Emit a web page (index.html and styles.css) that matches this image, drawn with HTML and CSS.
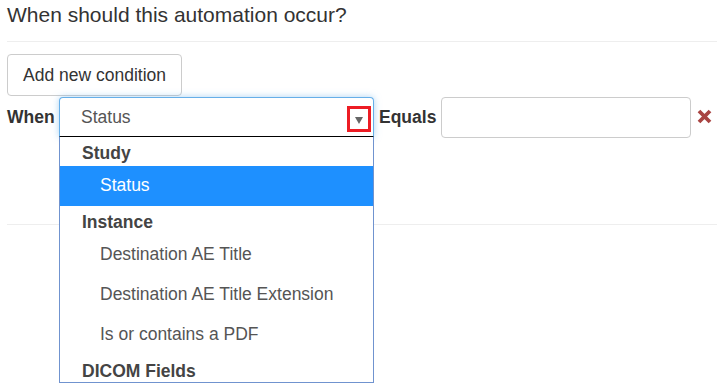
FILE: index.html
```html
<!DOCTYPE html>
<html>
<head>
<meta charset="utf-8">
<link rel="stylesheet" href="styles.css">
</head>
<body>
<div class="page">
  <h4 class="title">When should this automation occur?</h4>
  <hr class="rule rule-top">
  <button class="btn">Add new condition</button>
  <div class="cond-row">
    <label class="lbl lbl-when">When</label>
    <div class="select-wrap">
      <div class="select">
        <span class="select-value">Status</span>
        <span class="arrow-box"><span class="arrow"></span></span>
      </div>
      <div class="menu">
        <div class="group">Study</div>
        <div class="opt active">Status</div>
        <div class="group">Instance</div>
        <div class="opt">Destination AE Title</div>
        <div class="opt">Destination AE Title Extension</div>
        <div class="opt">Is or contains a PDF</div>
        <div class="group">DICOM Fields</div>
      </div>
    </div>
    <label class="lbl lbl-eq">Equals</label>
    <input class="text-input" type="text">
    <span class="remove">
      <svg width="15" height="15" viewBox="0 0 15 15"><path d="M2 2 L13 13 M13 2 L2 13" stroke="#a94442" stroke-width="3.8" stroke-linecap="butt"/></svg>
    </span>
  </div>
  <hr class="rule rule-bottom">
</div>
</body>
</html>
```
FILE: styles.css
```css
html, body {
  margin: 0;
  padding: 0;
  background: #fff;
}
body {
  font-family: "Liberation Sans", Arial, sans-serif;
  color: #333;
  font-size: 17.5px;
  min-height: 386px;
  overflow: hidden;
}
.page {
  padding: 0 0 0 7px;
  min-height: 386px;
}
.title {
  margin: 0;
  font-size: 21px;
  font-weight: normal;
  line-height: 30px;
  color: #333;
}
.rule {
  border: 0;
  border-top: 1px solid #eee;
  margin: 0;
}
.rule-top {
  margin-top: 11px;
}
.btn {
  display: block;
  margin-top: 12px;
  height: 42px;
  width: 175px;
  padding: 0 15px;
  font-family: "Liberation Sans", Arial, sans-serif;
  font-size: 17.5px;
  color: #333;
  background: #fff;
  border: 1px solid #ccc;
  border-radius: 4px;
  text-align: left;
  white-space: nowrap;
}
.cond-row {
  display: flex;
  align-items: center;
  margin-top: 1px;
  height: 41px;
}
.lbl {
  font-weight: bold;
  font-size: 17.5px;
  color: #333;
}
.lbl-when {
  width: 52px;
}
.select-wrap {
  position: relative;
  width: 315px;
  height: 40px;
  align-self: flex-start;
}
.select {
  box-sizing: border-box;
  height: 40px;
  border: 1px solid #66afe9;
  border-bottom: 1px solid #000;
  border-radius: 4px 4px 0 0;
  box-shadow: 0 0 7px rgba(102, 175, 233, 0.55);
  display: flex;
  align-items: center;
  padding-left: 21px;
  color: #555;
  background: #fff;
}
.arrow-box {
  position: absolute;
  left: 288px;
  top: 9px;
  width: 18px;
  height: 20px;
  border: 3px solid #ed1c24;
  display: flex;
  align-items: center;
  justify-content: center;
}
.arrow {
  width: 0;
  height: 0;
  border-left: 4px solid transparent;
  border-right: 4px solid transparent;
  border-top: 7px solid #666;
  margin-top: 2px;
}
.menu {
  position: absolute;
  left: 0;
  top: 40px;
  width: 315px;
  box-sizing: border-box;
  height: 246px;
  overflow: hidden;
  border: 1px solid #7093cf;
  border-top: 0;
  background: #fff;
  z-index: 5;
}
.group {
  height: 29px;
  line-height: 33px;
  padding-left: 22px;
  font-weight: bold;
  color: #444;
}
.opt {
  height: 40px;
  line-height: 39px;
  padding-left: 40px;
  color: #555;
}
.opt.active {
  background: #1e90ff;
  color: #fff;
}
.lbl-eq {
  margin-left: 5px;
  width: 62px;
}
.text-input {
  box-sizing: border-box;
  width: 250px;
  height: 41px;
  border: 1px solid #ccc;
  border-radius: 4px;
  margin: 0;
  padding: 0 12px;
  align-self: flex-start;
}
.remove {
  margin-left: 6px;
  display: flex;
  margin-top: -3px;
}
.rule-bottom {
  margin-top: 86px;
}
```
